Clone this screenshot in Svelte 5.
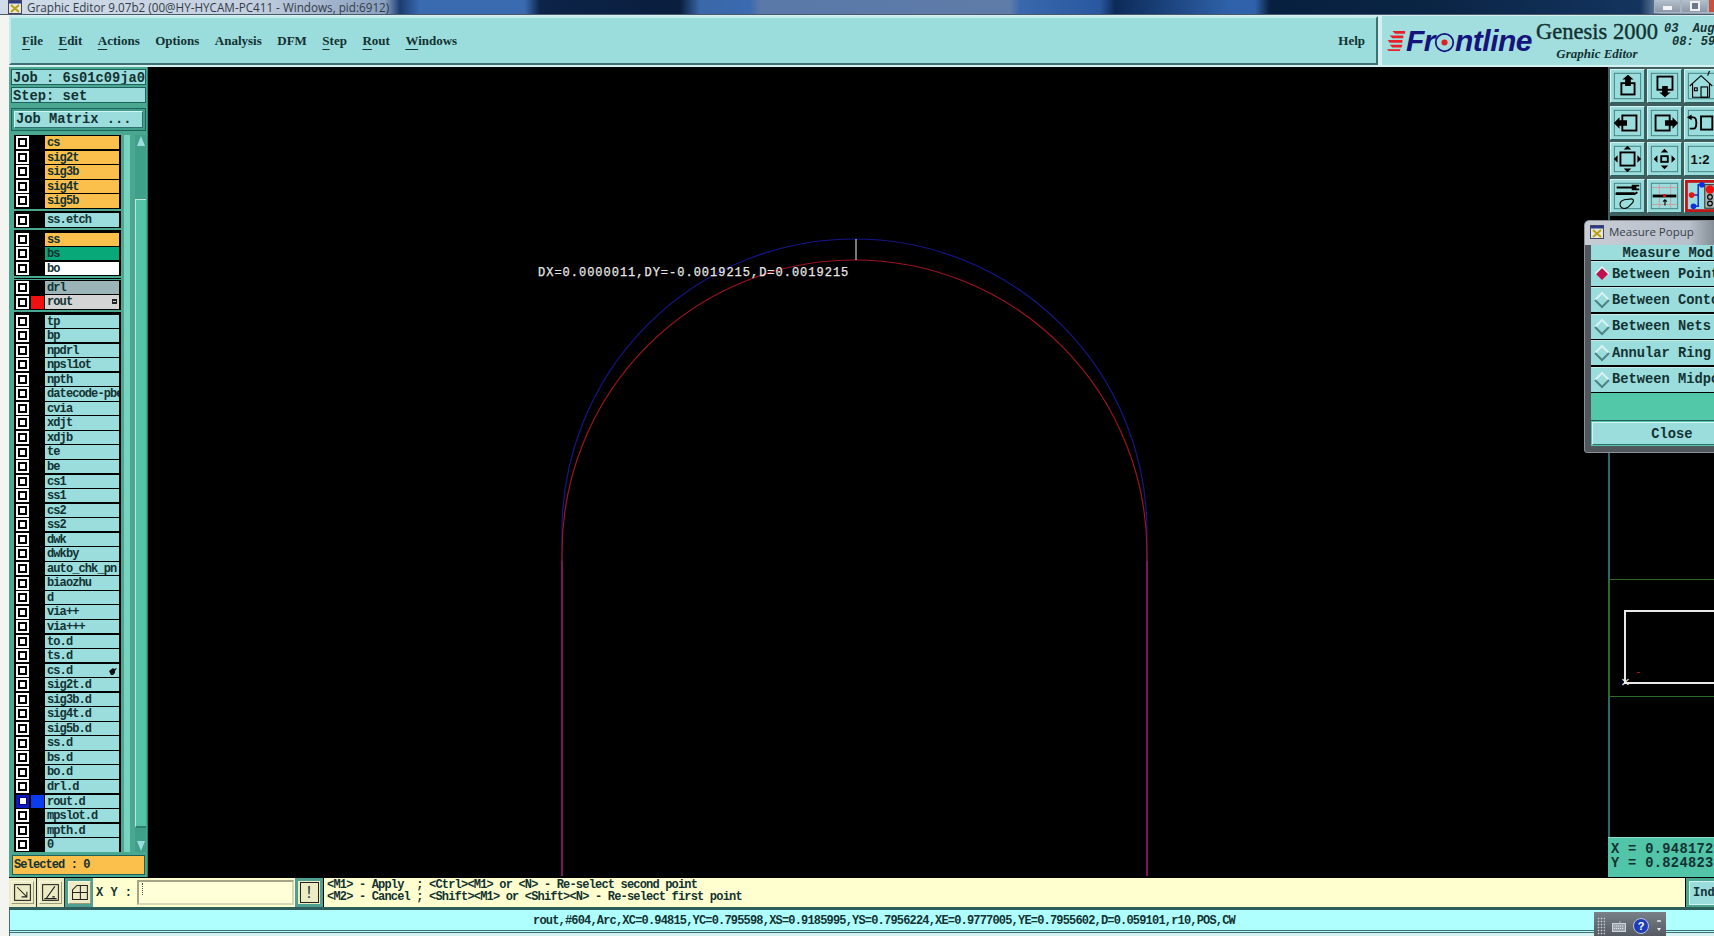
<script>
	const menus = ['File', 'Edit', 'Actions', 'Options', 'Analysis', 'DFM', 'Step', 'Rout', 'Windows'];
	const noUnderline = ['Options', 'Analysis', 'DFM'];

	// o = orange board layers, the rest are plain teal unless flagged
	const groups = [
		[['cs', 'o'], ['sig2t', 'o'], ['sig3b', 'o'], ['sig4t', 'o'], ['sig5b', 'o']],
		[['ss.etch']],
		[['ss', 'o'], ['bs', 'g'], ['bo', 'w']],
		[['drl', 'd'], ['rout', 'r']],
		[
			['tp'], ['bp'], ['npdrl'], ['npsl1ot'], ['npth'], ['datecode-pbe'], ['cvia'], ['xdjt'], ['xdjb'],
			['te'], ['be'], ['cs1'], ['ss1'], ['cs2'], ['ss2'], ['dwk'], ['dwkby'], ['auto_chk_pn'], ['biaozhu'],
			['d'], ['via++'], ['via+++'], ['to.d'], ['ts.d'], ['cs.d', 'h'], ['sig2t.d'], ['sig3b.d'], ['sig4t.d'],
			['sig5b.d'], ['ss.d'], ['bs.d'], ['bo.d'], ['drl.d'], ['rout.d', 'b'], ['mpslot.d'], ['mpth.d'], ['0']
		]
	];

	const modes = ['Between Points', 'Between Contours', 'Between Nets', 'Annular Ring', 'Between Midpoints'];

	const arrows = (a, b) => `
		<path class="f" d="M17.5 ${9 - a} l-${b} ${b} h${2 * b}z M17.5 ${25 + a} l-${b} -${b} h${2 * b}z M${9 - a} 17 l${b} -${b} v${2 * b}z M${26 + a} 17 l-${b} -${b} v${2 * b}z"/>`;

	const inner = '<rect class="in" x="3.5" y="3.5" width="28" height="27"/>';

	const tools = [
		'<rect class="s" x="11" y="14" width="14" height="12"/><path class="f" d="M18 5l6 5h-3v7h-6v-7h-3z"/>',
		'<rect class="s" x="10" y="7" width="16" height="14"/><path class="f" d="M18 29l6-5h-3v-7h-6v7h-3z"/>',
		'<path class="s t" d="M5 17L17 6l12 11M8 15v14h18V15M24 6l2-5"/><rect class="s t" x="10" y="19" width="3" height="3"/><rect class="s t" x="17" y="18" width="7" height="11"/>',
		'<rect class="s" x="12" y="9" width="15" height="16"/><path class="f" d="M3 17l6-6v3h8v6H9v3z"/>',
		'<rect class="s" x="8" y="9" width="15" height="16"/><path class="f" d="M32 17l-6-6v3h-8v6h8v3z"/>',
		'<rect class="s" x="17" y="10" width="12" height="14"/><path class="s" d="M5 11h4q3 0 3 6t-3 6H5"/><path class="f" d="M2 11l5-3v6z"/>',
		'<rect class="s" x="10" y="10" width="15" height="14"/>' + arrows(6, 4),
		'<rect class="s" x="14" y="14" width="7" height="6"/>' + arrows(3, 4),
		'<text x="16" y="22.500" text-anchor="middle" class="ratio">1:2</text>',
		'<path class="s" d="M6 8h18M5 15h20l3-2" /><path class="f" d="M22 5h8v2h-3v2h3v2h-8zM5 13h20v3H5z"/><path class="s t" d="M10 28q-2-5 4-7l8-1q3 1 1 4l-5 5q-5 3-8-1z"/>',
		'<path class="grid" d="M4 8h27M4 17h27M4 26h27M12 4v26M24 4v26"/><path class="f" d="M5 15.500h25v3H5z"/><path class="red" d="M16 15h3v3h-3z"/><path class="s t" d="M18 27v-6M16 23l2-2 2 2"/>',
		'<rect class="frame" x="1.5" y="1.5" width="33" height="31"/><path class="route" d="M7 16h7V5h4M14 16v12H9"/><circle class="bl" cx="18" cy="5" r="3"/><circle class="bl" cx="9" cy="28" r="3"/><circle class="rd" cx="7" cy="16" r="3"/><rect class="box" x="21" y="5" width="11" height="25"/><circle class="rd" cx="26.5" cy="10" r="4.500"/><circle class="s t" cx="26.5" cy="18" r="2.500"/><circle class="s t" cx="26.5" cy="25" r="2.500"/>'
	];
</script>

<div class="screen">
	<div class="titlebar">
		<svg class="appicon" viewBox="0 0 14 14">
			<rect x="0.5" y="0.5" width="13" height="13" fill="#e8e8d8" stroke="#444466" />
			<rect x="1" y="1" width="12" height="2.5" fill="#2a3a8a" />
			<path d="M3 5l8 7M11 5l-8 7" stroke="#b8a018" stroke-width="2" />
		</svg>
		<span class="titletext">Graphic Editor 9.07b2 (00@HY-HYCAM-PC411 - Windows, pid:6912)</span>
		<div class="winbtns">
			<span class="wb"><i class="minbar"></i></span>
			<span class="wb"><i class="maxbox"></i></span>
			<span class="wb close"></span>
		</div>
	</div>

	<div class="top">
		<nav class="menubar">
			{#each menus as m}
				<span class="menu" class:plain={noUnderline.includes(m)}><u>{m[0]}</u>{m.slice(1)}</span>
			{/each}
			<span class="menu help">Help</span>
		</nav>
		<div class="brand">
			<div class="logo">
				<svg class="stripes" viewBox="0 0 20 24">
					<path d="M6 1h14v3H9zM3 6h15v3H6zM1 11h16v3H3zM3 16h14l-1 3H6zM0 21h15l-1 2H2z" fill="#e8202a" />
				</svg>
				<span class="word">Fr</span>
				<svg class="oh" viewBox="0 0 24 24">
					<circle cx="12" cy="12" r="10" fill="none" stroke="#14147c" stroke-width="2" />
					<circle cx="12" cy="12" r="3.5" fill="#e02020" />
				</svg>
				<span class="word">ntline</span>
			</div>
			<div class="product">
				<div class="genesis">Genesis 2000</div>
				<div class="sub">Graphic Editor</div>
			</div>
			<div class="clock">
				<div>03&nbsp; Aug</div>
				<div class="time">08: 59</div>
			</div>
		</div>
	</div>

	<div class="main">
		<aside class="left">
			<div class="info">Job : 6s01c09ja0</div>
			<div class="info">Step: set</div>
			<div class="matrix"><div class="matrixbtn">Job Matrix ...</div></div>

			<div class="listwrap">
				<div class="list">
					{#each groups as group}
						<div class="group">
							{#each group as [name, kind]}
								<div class="row">
									<span class="check" class:on={kind === 'b'}><i></i></span>
									<span class="swatch {kind === 'r' ? 'red' : ''} {kind === 'b' ? 'blue' : ''}"></span>
									<span class="name {kind ?? ''}">
										{name}
										{#if kind === 'r'}<i class="mark"></i>{/if}
										{#if kind === 'h'}<svg class="hand" viewBox="0 0 8 8"><path d="M0 4l4-3 1 1 3-1-2 3v2l-2 2H2z" /></svg>{/if}
									</span>
								</div>
							{/each}
						</div>
					{/each}
				</div>
				<div class="strip"></div>
				<div class="scroll">
					<svg class="arr" viewBox="0 0 10 12"><path d="M5 1l4 10H1z" /></svg>
					<div class="above"></div>
					<div class="thumb"></div>
					<div class="below"></div>
					<svg class="arr" viewBox="0 0 10 12"><path d="M5 11L9 1H1z" /></svg>
				</div>
			</div>

			<div class="selected">Selected : 0</div>
		</aside>

		<div class="canvas">
			<svg class="drawing" viewBox="148 67 1460 808">
				<path d="M562 875V530.500A292.500 292.500 0 0 1 1147 530.500V875" fill="none" stroke="#16168c" stroke-width="1.2" />
				<path d="M562 875V551.500A292.500 292.500 0 0 1 1147 551.500V875" fill="none" stroke="#9c1420" stroke-width="1.2" />
				<path d="M562 560V875M1147 560V875" stroke="#8c1c78" stroke-width="1.2" />
				<path d="M856 238V259" stroke="#f0f0f0" />
				<text x="538" y="275" class="measure">DX=0.0000011,DY=-0.0019215,D=0.0019215</text>
			</svg>
		</div>

		<aside class="right">
			<div class="tools">
				{#each tools as t, i}
					<div class="tool">
						<svg viewBox="0 0 35 34">{@html (i === 11 ? '' : inner) + t}</svg>
					</div>
				{/each}
			</div>
			<div class="view">
				<div class="mini">
					<div class="sheet"></div>
					<span class="cross">×</span>
					<i class="dot"></i>
				</div>
			</div>
			<div class="xy">
				<div>X = 0.948172"</div>
				<div>Y = 0.824823"</div>
			</div>
		</aside>

		<div class="popup">
			<div class="ptitle">
				<svg class="appicon" viewBox="0 0 14 14">
					<rect x="0.5" y="0.5" width="13" height="13" fill="#e8e8d8" stroke="#444466" />
					<rect x="1" y="1" width="12" height="2.5" fill="#2a3a8a" />
					<path d="M3 5l8 7M11 5l-8 7" stroke="#b8a018" stroke-width="2" />
				</svg>
				<span>Measure Popup</span>
			</div>
			<div class="pbody">
				<div class="phead">Measure Mode</div>
				{#each modes as m, i}
					<div class="mode">
						<svg class="diamond" viewBox="0 0 18 18">
							{#if i === 0}
								<path d="M9 3l6 6-6 6-6-6z" fill="#c0104e" />
								<path d="M2 9l7-7 7 7" fill="none" stroke="#e8f4f4" stroke-width="1.4" />
							{:else}
								<path d="M2 9l7-7 7 7" fill="none" stroke="#d8f2f2" stroke-width="2" />
								<path d="M2 9l7 7 7-7" fill="none" stroke="#4f8484" stroke-width="2" />
							{/if}
						</svg>
						<span>{m}</span>
					</div>
				{/each}
				<div class="pgap"></div>
				<div class="pclose"><div>Close</div></div>
			</div>
		</div>
	</div>

	<div class="toolbar">
		<div class="tb">
			<svg viewBox="0 0 24 24"><rect class="s1" x="3" y="3" width="18" height="18" /><path class="s1" d="M6 6l11 11M17 11v6h-6" /></svg>
		</div>
		<div class="tb">
			<svg viewBox="0 0 24 24"><rect class="s1" x="3" y="3" width="18" height="18" /><path class="s1" d="M5 19h14M7 19L17 5M14 17h3" /></svg>
		</div>
		<div class="tb active">
			<svg viewBox="0 0 24 24"><path class="s1" d="M9 4h12v16H4V9zM13 4v16M4 12h17" /></svg>
		</div>
		<span class="xylabel">X Y :</span>
		<div class="input"><i class="caret"></i></div>
		<div class="tb active bang"><span>!</span></div>
		<div class="hints">
			<div>&lt;M1&gt; - Apply  ; &lt;Ctrl&gt;&lt;M1&gt; or &lt;N&gt; - Re-select second point</div>
			<div>&lt;M2&gt; - Cancel ; &lt;Shift&gt;&lt;M1&gt; or &lt;Shift&gt;&lt;N&gt; - Re-select first point</div>
		</div>
		<div class="ind"><div>Ind</div></div>
	</div>

	<div class="status">
		<span>rout,#604,Arc,XC=0.94815,YC=0.795598,XS=0.9185995,YS=0.7956224,XE=0.9777005,YE=0.7955602,D=0.059101,r10,POS,CW</span>
		<div class="tray">
			<span class="dots"></span>
			<svg class="kbd" viewBox="0 0 14 12"><rect x="0.5" y="3.5" width="13" height="8" fill="#9aa2aa" stroke="#d0d4d8" /><path d="M2 6h10M2 8.500h10" stroke="#e4e8ec" stroke-dasharray="1 1" /><path d="M8 3V1" stroke="#b0b4b8" /></svg>
			<span class="q">?</span>
			<svg class="more" viewBox="0 0 6 14"><path d="M1 2h4" stroke="#eee" stroke-width="1.4" /><path d="M1 9h4l-2 3z" fill="#eee" /></svg>
		</div>
	</div>
</div>

<style>
	:global(body) {
		margin: 0;
		background: #fff;
	}

	.screen {
		position: relative;
		display: flex;
		flex-direction: column;
		width: 1714px;
		height: 936px;
		overflow: hidden;
		background: #f4f4f0;
		font-family: "Liberation Mono", monospace;
		font-weight: 700;
		color: #123232;
	}

	/* window title */
	.titlebar {
		display: flex;
		align-items: center;
		height: 14px;
		flex: none;
		padding-left: 8px;
		border-bottom: 1px solid #4a5a68;
		background: linear-gradient(90deg, #d0dce8 0, #c4d0e0 250px, #8aa0c0 385px, #1c3c70 400px, #3a6ab0 420px, #3a6ab0 525px, #0c2448 540px, #0a1e3e 680px, #3a68a8 700px, #3a6ab0 750px, #5a78a8 760px, #5f7ca8 1010px, #3a68ac 1020px, #2a58a0 1100px, #0c2a58 1115px, #2f62aa 1230px, #2f62aa 1255px, #08203f 1270px, #0a2444 1430px, #14345f 1640px, #7f93ab 1662px, #9aa8b8 1714px);
	}
	.appicon {
		width: 14px;
		height: 14px;
		flex: none;
	}
	.titletext {
		margin-left: 5px;
		font: 400 11.700px "Open Sans", sans-serif;
		color: #333c48;
		white-space: nowrap;
	}
	.winbtns {
		display: flex;
		height: 13px;
		margin-left: auto;
		margin-top: -1px;
		margin-right: -1px;
	}
	.wb {
		display: flex;
		align-items: center;
		justify-content: center;
		width: 25px;
		border: 1px solid #a8b4c0;
		border-top: none;
		background: linear-gradient(#b4c0cc, #8c98a8);
	}
	.wb.close {
		width: 5px;
		background: #c8503c;
	}
	.minbar {
		width: 9px;
		height: 4px;
		background: #f4f4f4;
		margin-top: 3px;
	}
	.maxbox {
		width: 6px;
		height: 6px;
		border: 2px solid #f0f0f0;
		background: #6a7a8a;
	}

	/* menu and brand */
	.top {
		display: flex;
		flex: none;
		height: 52px;
		margin-left: 9px;
		background: #d4f0f0;
	}
	.menubar {
		display: flex;
		align-items: center;
		gap: 15.500px;
		flex: 1;
		padding: 0 11px 0 11px;
		margin: 1px 0 2px;
		background: #9bdcdc;
		border: 2px solid;
		border-color: #c4ecec #3f6f72 #3f6f72 #c4ecec;
		font: 700 13px "Liberation Serif", serif;
	}
	.menu u {
		text-underline-offset: 4px;
		text-decoration-thickness: 1px;
	}
	.menu.plain u {
		text-decoration: none;
	}
	.help {
		margin-left: auto;
	}
	.brand {
		position: relative;
		display: flex;
		width: 332px;
		margin: 1px 0 2px 3px;
		background: #a2dede;
		flex: none;
		border-left: 1px solid #d4f0f0;
	}
	.logo {
		display: flex;
		align-items: center;
		gap: 0;
		margin: 11px 0 0 4px;
		height: 28px;
		width: 147px;
		flex: none;
	}
	.stripes {
		width: 20px;
		height: 22px;
		flex: none;
	}
	.word {
		font: italic 700 30px "Liberation Sans", sans-serif;
		letter-spacing: -0.500px;
		color: #14147c;
	}
	.oh {
		width: 21px;
		height: 21px;
		margin: 2px 0 0 -1px;
		flex: none;
	}
	.product {
		width: 128px;
		flex: none;
		text-align: center;
		font-family: "Liberation Serif", serif;
		white-space: nowrap;
	}
	.genesis {
		font-size: 22.500px;
		line-height: 26px;
		margin-top: 3px;
		font-weight: 400;
		-webkit-text-stroke: 0.4px #123232;
	}
	.sub {
		font: italic 700 13px "Liberation Serif", serif;
		margin-top: 1px;
	}
	.clock {
		margin: 7px 0 0 3px;
		font: italic 700 12px "Liberation Mono", monospace;
		line-height: 13px;
		white-space: nowrap;
	}
	.time {
		margin-left: 8px;
	}

	/* main row */
	.main {
		position: relative;
		display: flex;
		flex: 1;
		min-height: 0;
	}

	.left {
		display: flex;
		flex-direction: column;
		width: 139px;
		margin-left: 9px;
		padding: 2px 1px 3px 2px;
		box-sizing: border-box;
		background: #4aa890;
		border-right: 1px solid #2b7a6a;
		flex: none;
		font-size: 13.750px;
	}
	.info {
		height: 16px;
		line-height: 19px;
		padding-left: 2px;
		margin-bottom: 2px;
		background: #9bdcdc;
		outline: 1px solid #1f5f5c;
		outline-offset: -1px;
		white-space: nowrap;
	}
	.matrix {
		margin: 3px 0 4px;
		padding: 3px;
		background: #3f9f8a;
		outline: 1px solid #1f5f5c;
		outline-offset: -1px;
	}
	.matrixbtn {
		height: 15px;
		line-height: 15px;
		padding-left: 1px;
		background: #9bdcdc;
		border: 1px solid;
		border-color: #d4f4f4 #2f6f6c #2f6f6c #d4f4f4;
		white-space: nowrap;
	}

	.listwrap {
		display: flex;
		flex: 1;
		min-height: 0;
		overflow: hidden;
		margin-bottom: 3px;
	}
	.list {
		width: 107px;
		margin-left: 3px;
		flex: none;
		overflow: hidden;
	}
	.group {
		padding: 0.500px 0;
		background: #000;
		box-shadow: 0 2px 0 #4aa890, 0 3px 0 #000;
		margin-bottom: 3.600px;
	}
	.row {
		display: flex;
		align-items: center;
		gap: 2px;
		height: 14.550px;
		padding-left: 2px;
	}
	.check {
		display: flex;
		align-items: center;
		justify-content: center;
		width: 13px;
		height: 13px;
		background: #fff;
		flex: none;
	}
	.check i {
		width: 5px;
		height: 5px;
		border: 2px solid #000;
		background: #fff;
	}
	.check.on {
		background: #0a1ac0;
	}
	.check.on i {
		border-color: #000088;
		border-width: 1px;
		width: 6px;
		height: 6px;
	}
	.swatch {
		width: 13px;
		height: 13px;
		flex: none;
	}
	.swatch.red {
		background: #f01010;
	}
	.swatch.blue {
		background: #0a3cf0;
	}
	.name {
		position: relative;
		width: 74px;
		height: 13.300px;
		line-height: 14px;
		margin-left: -1px;
		padding-left: 2px;
		box-sizing: border-box;
		overflow: hidden;
		white-space: nowrap;
		font-size: 12px;
		letter-spacing: -0.900px;
		background: #9bdcdc;
	}
	.name.o {
		background: #fbbf4c;
	}
	.name.g {
		background: #08a878;
	}
	.name.w {
		background: #fff;
	}
	.name.d {
		background: #9ab4b8;
	}
	.name.r {
		background: #d4d4d4;
	}
	.mark {
		position: absolute;
		right: 2px;
		top: 4px;
		width: 5px;
		height: 5px;
		border: 1px solid #222;
		border-width: 2px 1px;
		box-sizing: border-box;
	}
	.hand {
		position: absolute;
		right: 2px;
		top: 3px;
		width: 8px;
		height: 8px;
		fill: #111;
	}
	.strip {
		width: 6px;
		margin-left: 3px;
		background: #78d4c0;
		flex: none;
	}
	.scroll {
		display: flex;
		flex-direction: column;
		width: 12px;
		margin-left: 5px;
		background: #3f9f88;
		flex: none;
	}
	.arr {
		width: 10px;
		height: 12px;
		margin: 0 1px;
		fill: #9bdcdc;
		flex: none;
	}
	.above {
		height: 52px;
		background: #3f9f88;
	}
	.thumb {
		flex: 1;
		background: #54c4a8;
		border-top: 1px solid #bce8dc;
		border-left: 1px solid #bce8dc;
		border-bottom: 2px solid #2f7f70;
	}
	.below {
		height: 12px;
	}
	.selected {
		height: 18px;
		line-height: 18px;
		margin: 1px 2px 0;
		padding-left: 1px;
		background: #fbbf4c;
		outline: 1px solid #1f5f5c;
		font-size: 12px;
		letter-spacing: -0.900px;
	}

	.canvas {
		flex: 1;
		min-width: 0;
		background: #000;
	}
	.drawing {
		display: block;
		width: 100%;
		height: 100%;
	}
	.measure {
		font: 400 12px "Liberation Mono", monospace;
		letter-spacing: 0.990px;
		stroke: #e6e6e6;
		stroke-width: 0.25;
		fill: #e6e6e6;
	}

	/* right column */
	.right {
		display: flex;
		flex-direction: column;
		width: 106px;
		overflow: hidden;
		background: #000;
		flex: none;
	}
	.tools {
		display: grid;
		grid-template-columns: repeat(3, 35px);
		grid-auto-rows: 34px;
		gap: 2.500px 2px;
		padding: 2px 0 3px 2px;
		background: #3f5f5f;
		flex: none;
	}
	.tool {
		box-sizing: border-box;
		background: #9bdcdc;
		border: 1px solid;
		border-color: #d4f4f4 #2f5f5f #2f5f5f #d4f4f4;
	}
	.tool svg {
		display: block;
		width: 100%;
		height: 100%;
	}
	.tool :global(.in) {
		fill: none;
		stroke: #3f7f7f;
	}
	.tool :global(.s) {
		fill: none;
		stroke: #000;
		stroke-width: 2;
	}
	.tool :global(.t) {
		stroke-width: 1.200;
	}
	.tool :global(.f) {
		fill: #000;
	}
	.tool :global(.ratio) {
		font: 700 14px "Liberation Sans", sans-serif;
		fill: #111;
	}
	.tool :global(.grid) {
		fill: none;
		stroke: #d09aa0;
		stroke-width: 1;
	}
	.tool :global(.red) {
		fill: #e01010;
	}
	.tool :global(.frame) {
		fill: #9bdcdc;
		stroke: #c01818;
		stroke-width: 3;
	}
	.tool :global(.route) {
		fill: none;
		stroke: #1030d0;
		stroke-width: 1.600;
	}
	.tool :global(.bl) {
		fill: #1030e0;
	}
	.tool :global(.rd) {
		fill: #f01010;
	}
	.tool :global(.box) {
		fill: #a8b0b0;
		stroke: #222;
	}

	.view {
		flex: 1;
		padding-top: 363px;
		border-left: 2px solid #2a6a6a;
	}
	.mini {
		position: relative;
		height: 118px;
		margin-left: -2px;
		box-sizing: border-box;
		border: 1px solid #2f6a2a;
		border-left-width: 2px;
		border-right: none;
	}
	.sheet {
		height: 70px;
		margin: 30px 0 0 14px;
		border: 2px solid #e8e8e8;
		border-right: none;
	}
	.cross {
		position: absolute;
		left: 11px;
		top: 94px;
		font: 400 15px/15px "Liberation Sans", sans-serif;
		color: #f0f0f0;
	}
	.dot {
		position: absolute;
		left: 27px;
		top: 92px;
		width: 3px;
		height: 1px;
		background: #a01818;
	}
	.xy {
		height: 40px;
		padding: 5px 0 0 3px;
		box-sizing: border-box;
		background: #52c4a8;
		border-top: 1px solid #8adcc8;
		font-size: 13.750px;
		line-height: 14px;
		letter-spacing: 0.300px;
		white-space: nowrap;
		flex: none;
	}

	/* floating measure window */
	.popup {
		position: absolute;
		left: 1584px;
		top: 153px;
		width: 176px;
		height: 233px;
		padding: 0 6px 6px;
		box-sizing: border-box;
		background: #50565c;
		border: 1px solid #8a9098;
		border-radius: 5px 5px 3px 3px;
	}
	.ptitle {
		display: flex;
		align-items: center;
		gap: 5px;
		height: 21px;
		padding: 0 0 3px 5px;
		margin: 0 -6px;
		border-radius: 4px 4px 0 0;
		background: linear-gradient(90deg, #c8ccd4 0, #b8c0cc 60%, #707880 80%, #484c50 100%);
		font: 400 11.500px "Open Sans", sans-serif;
		color: #384048;
	}
	.pbody {
		display: flex;
		flex-direction: column;
		height: 201px;
		background: #000;
		font-size: 13.750px;
		white-space: nowrap;
	}
	.phead {
		height: 15px;
		line-height: 18px;
		text-align: center;
		background: #9bdcdc;
		margin-bottom: 1px;
	}
	.mode {
		display: flex;
		align-items: center;
		gap: 1px;
		height: 25px;
		margin-bottom: 1.400px;
		background: #9bdcdc;
		border-top: 1px solid #c4ecec;
		box-sizing: border-box;
	}
	.diamond {
		width: 18px;
		height: 18px;
		margin-left: 2px;
		flex: none;
	}
	.pgap {
		flex: 1;
		background: #52c8a8;
	}
	.pclose {
		padding: 1px;
		background: #52c8a8;
		border-top: 1px solid #1f5f5c;
	}
	.pclose div {
		height: 21px;
		line-height: 24px;
		text-align: center;
		background: #9bdcdc;
		border: 1px solid;
		border-color: #d4f4f4 #2f6f6c #2f6f6c #d4f4f4;
	}

	/* bottom */
	.toolbar {
		display: flex;
		align-items: stretch;
		flex: none;
		height: 33px;
		margin-left: 9px;
		box-sizing: border-box;
		background: #ffffd0;
		border-bottom: 3px solid #2f5f5c;
		border-top: 1px solid #000;
	}
	.tb {
		display: flex;
		align-items: center;
		justify-content: center;
		width: 28px;
		flex: none;
		box-sizing: border-box;
		background: #ecebc4;
		border: 1px solid #1f2f2f;
		border-width: 0 1px 0 0;
	}
	.tb svg {
		width: 21px;
		height: 21px;
		border: 1px solid;
		border-color: #f8f8e0 #9a9a7c #9a9a7c #f8f8e0;
	}
	.tb.active {
		background: #ecebc4;
		box-shadow: inset 0 0 0 3px #4fa090;
		border: none;
	}
	.bang span {
		display: block;
		width: 17px;
		height: 19px;
		line-height: 19px;
		text-align: center;
		border: 1px solid #222;
		font: 400 16px/19px "Liberation Sans", sans-serif;
	}
	.s1 {
		fill: none;
		stroke: #222;
		stroke-width: 1.200;
	}
	.xylabel {
		width: 44px;
		padding-left: 3px;
		box-sizing: border-box;
		align-self: center;
		font-size: 12px;
		white-space: nowrap;
		flex: none;
	}
	.input {
		width: 157px;
		margin: 2px 1px 2px 0;
		box-sizing: border-box;
		background: #ffffd8;
		border: 2px solid;
		border-color: #a4a486 #d8d8b8 #d8d8b8 #a4a486;
		flex: none;
	}
	.caret {
		display: block;
		width: 1px;
		height: 12px;
		margin: 1px 0 0 3px;
		border-left: 1px dotted #555;
	}
	.hints {
		flex: 1;
		padding: 1px 0 0 3px;
		border-left: 1px solid #000;
		font-size: 12px;
		line-height: 12px;
		letter-spacing: -0.820px;
		min-width: 0;
	}
	.hints div {
		white-space: pre;
	}
	.ind {
		width: 29px;
		padding: 3px 0 0 3px;
		box-sizing: border-box;
		background: #4aa890;
		border-left: 1px solid #000;
		flex: none;
	}
	.ind div {
		height: 22px;
		line-height: 22px;
		padding-left: 3px;
		background: #9bdcdc;
		font-size: 12px;
		border: 1px solid #d4f4f4;
		border-right: none;
	}
	.status {
		position: relative;
		display: flex;
		align-items: center;
		justify-content: center;
		flex: none;
		height: 26px;
		margin-left: 9px;
		padding: 0 0 5px 44px;
		background: linear-gradient(#b0ffff 0 20px, #3f6f72 20px 21px, #b0ffff 21px 22px, #3f6f72 22px 23px, #d4f0f0 23px);
		border-left: 1px solid #3f6f72;
		font-size: 12px;
		letter-spacing: -0.820px;
		white-space: pre;
		box-sizing: border-box;
	}
	.tray {
		position: absolute;
		left: 1584px;
		top: 2px;
		display: flex;
		align-items: center;
		gap: 7px;
		width: 72px;
		height: 27px;
		padding-left: 3px;
		box-sizing: border-box;
		background: linear-gradient(#7a8088, #50565c);
		letter-spacing: 0;
	}
	.dots {
		width: 8px;
		height: 18px;
		background: radial-gradient(#c8ccd0 40%, transparent 50%) 0 0 / 3px 3px;
		flex: none;
	}
	.kbd {
		width: 14px;
		height: 12px;
		flex: none;
	}
	.q {
		width: 14px;
		height: 14px;
		line-height: 14px;
		text-align: center;
		border-radius: 50%;
		background: #1c3cb8;
		border: 1px solid #b8c4e0;
		color: #fff;
		font: 700 11px/14px "Liberation Sans", sans-serif;
		flex: none;
	}
	.more {
		width: 6px;
		height: 14px;
		flex: none;
	}
</style>
